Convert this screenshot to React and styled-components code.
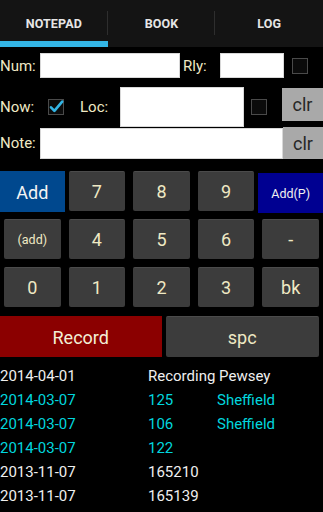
import React from 'react';
import styled, { createGlobalStyle } from 'styled-components';

const GlobalStyle = createGlobalStyle`
  html, body {
    margin: 0;
    padding: 0;
    background: #000;
  }
  body {
    width: 323px;
    height: 512px;
    overflow: hidden;
    font-family: Roboto, "Noto Sans", sans-serif;
  }
`;

const Screen = styled.div`
  width: 323px;
  background: #000;
`;

const TabBar = styled.div`
  display: flex;
  height: 47px;
  background: #141414;
`;

const Tab = styled.div`
  flex: 1;
  position: relative;
  display: flex;
  align-items: center;
  justify-content: center;
  padding-bottom: 1px;
  color: #e6e6e6;
  font: 700 12.5px Roboto, sans-serif;
  letter-spacing: 0.1px;

  &:not(:last-child)::after {
    content: '';
    position: absolute;
    right: 0;
    top: 11px;
    bottom: 12px;
    width: 1px;
    background: #2e2e2e;
  }

  &::before {
    content: '';
    display: ${(p) => (p.$active ? 'block' : 'none')};
    position: absolute;
    left: 0;
    right: 0;
    bottom: 0;
    height: 6px;
    background: #33b5e5;
  }
`;

const Form = styled.div`
  padding-top: 6px;
`;

const Row = styled.div`
  display: flex;
  align-items: ${(p) => p.$align || 'center'};
  height: ${(p) => p.$h}px;
  margin-top: ${(p) => p.$mt || 0}px;
`;

const Label = styled.span`
  width: ${(p) => p.$w}px;
  flex: none;
  padding-left: ${(p) => p.$pl || 0}px;
  margin-left: ${(p) => p.$ml || 0}px;
  box-sizing: border-box;
  color: #efe9c4;
  font-size: 15px;
`;

const Field = styled.div`
  width: ${(p) => p.$w}px;
  height: ${(p) => p.$h}px;
  flex: none;
  margin-top: ${(p) => p.$mt || 0}px;
  background: #fff;
  box-sizing: border-box;
  border: 1px solid #d8d8d8;
`;

const Box = styled.svg`
  flex: none;
  margin-left: ${(p) => p.$ml || 0}px;
  overflow: visible;
`;

const ClearButton = styled.div`
  width: ${(p) => p.$w}px;
  height: ${(p) => p.$h}px;
  flex: none;
  margin-left: ${(p) => p.$ml || 0}px;
  margin-top: ${(p) => p.$mt || 0}px;
  display: flex;
  align-items: center;
  justify-content: center;
  background: #a9a9a9;
  color: #262626;
  font-size: 18px;
`;

const Keypad = styled.div`
  display: grid;
  grid-template-columns: repeat(5, 1fr);
  grid-auto-rows: 48px;
  margin-top: 8px;
`;

const BottomRow = styled.div`
  display: grid;
  grid-template-columns: 1fr 1fr;
  height: 49px;
`;

const variants = {
  plain: { bg: '#3c3c3c', fg: '#efe9c4', margin: '4px', top: '#4b4b4b' },
  blue: { bg: '#00488e', fg: '#f4f4f4', margin: '4px 0 3px', top: '#00488e' },
  navy: { bg: '#000091', fg: '#f0f0f0', margin: '6px 0 2px', top: '#000091' },
  red: { bg: '#8b0000', fg: '#f3eed6', margin: '5px 0 3px', top: '#8b0000' },
  wide: { bg: '#3c3c3c', fg: '#efe9c4', margin: '5px 4px 3px', top: '#4b4b4b' },
};

const Key = styled.div`
  margin: ${(p) => variants[p.$v].margin};
  display: flex;
  align-items: center;
  justify-content: center;
  background: ${(p) => variants[p.$v].bg};
  border-top: 1px solid ${(p) => variants[p.$v].top};
  border-radius: ${(p) => (p.$v === 'plain' || p.$v === 'wide' ? '2px' : '0')};
  color: ${(p) => variants[p.$v].fg};
  font-size: ${(p) => p.$fs || 18}px;
`;

const List = styled.div`
  margin-top: 4px;
`;

const Entry = styled.div`
  display: grid;
  grid-template-columns: 148px 69px 1fr;
  height: 24px;
  line-height: 24px;
  font-size: 15px;
  color: ${(p) => (p.$hi ? '#00d6de' : '#efefef')};
  white-space: nowrap;
`;

const Checkbox = ({ checked, ml }) => (
  <Box $ml={ml} width="16" height="16" viewBox="0 0 16 16">
    <rect x="0.5" y="0.5" width="15" height="15" fill="#0b0b0b" stroke="#4a4a4a" />
    {checked && (
      <path d="M3 8.3 L6.4 11.8 L14.2 2.6" fill="none" stroke="#33b5e5" strokeWidth="2.6" strokeLinecap="round" strokeLinejoin="round" />
    )}
  </Box>
);

const keys = [
  { t: 'Add', v: 'blue', fs: 18 },
  { t: '7', v: 'plain' },
  { t: '8', v: 'plain' },
  { t: '9', v: 'plain' },
  { t: 'Add(P)', v: 'navy', fs: 12.5 },
  { t: '(add)', v: 'plain', fs: 12.5 },
  { t: '4', v: 'plain' },
  { t: '5', v: 'plain' },
  { t: '6', v: 'plain' },
  { t: '-', v: 'plain' },
  { t: '0', v: 'plain' },
  { t: '1', v: 'plain' },
  { t: '2', v: 'plain' },
  { t: '3', v: 'plain' },
  { t: 'bk', v: 'plain' },
];

const entries = [
  ['2014-04-01', 'Recording Pewsey', '', false],
  ['2014-03-07', '125', 'Sheffield', true],
  ['2014-03-07', '106', 'Sheffield', true],
  ['2014-03-07', '122', '', true],
  ['2013-11-07', '165210', '', false],
  ['2013-11-07', '165139', '', false],
];

const App = () => (
  <Screen>
    <GlobalStyle />
    <TabBar>
      <Tab $active>NOTEPAD</Tab>
      <Tab>BOOK</Tab>
      <Tab>LOG</Tab>
    </TabBar>

    <Form>
      <Row $h={25}>
        <Label $w={40}>Num:</Label>
        <Field $w={140} $h={25} />
        <Label $w={40} $pl={3}>Rly:</Label>
        <Field $w={64} $h={25} />
        <Checkbox ml={8} />
      </Row>

      <Row $h={40} $mt={9}>
        <Label $w={48}>Now:</Label>
        <Checkbox checked />
        <Label $w={40} $ml={16}>Loc:</Label>
        <Field $w={124} $h={40} />
        <Checkbox ml={7} />
        <ClearButton $w={41} $h={33} $ml={15} $mt={-5}>clr</ClearButton>
      </Row>

      <Row $h={32}>
        <Label $w={40}>Note:</Label>
        <Field $w={243} $h={31} $mt={1} />
        <ClearButton $w={40} $h={32}>clr</ClearButton>
      </Row>
    </Form>

    <Keypad>
      {keys.map((k, i) => (
        <Key key={i} $v={k.v} $fs={k.fs}>{k.t}</Key>
      ))}
    </Keypad>

    <BottomRow>
      <Key $v="red">Record</Key>
      <Key $v="wide">spc</Key>
    </BottomRow>

    <List>
      {entries.map(([d, a, b, hi], i) => (
        <Entry key={i} $hi={hi}>
          <span>{d}</span>
          {b ? (
            <>
              <span>{a}</span>
              <span>{b}</span>
            </>
          ) : (
            <span style={{ gridColumn: 'span 2' }}>{a}</span>
          )}
        </Entry>
      ))}
    </List>
  </Screen>
);

export default App;
